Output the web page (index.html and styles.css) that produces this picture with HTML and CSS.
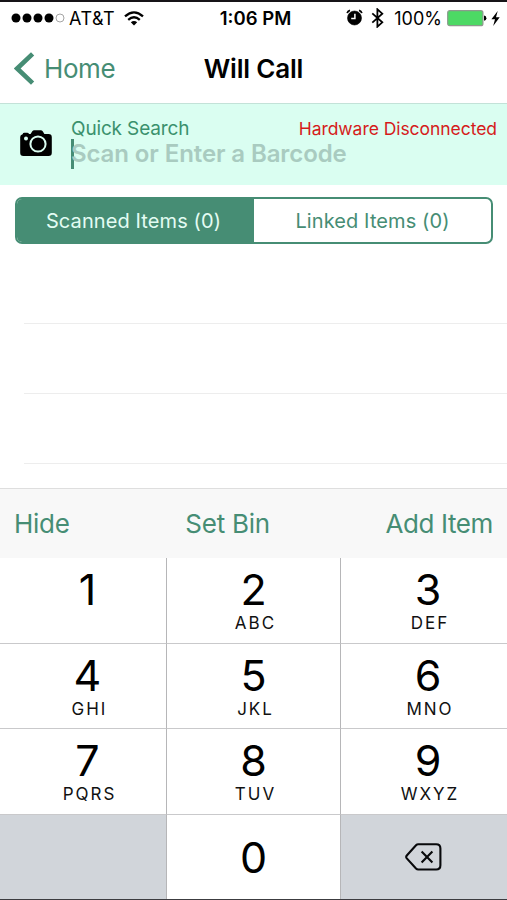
FILE: index.html
```html
<!DOCTYPE html>
<html lang="en">
<head>
<meta charset="utf-8">
<title>Will Call</title>
<link rel="stylesheet" href="styles.css">
</head>
<body>
<div class="screen">
  <header class="status">
    <div class="status-left">
      <svg class="signal" width="55" height="12" viewBox="0 0 55 12">
        <circle cx="5" cy="6" r="4.5"/><circle cx="16" cy="6" r="4.5"/><circle cx="27" cy="6" r="4.5"/><circle cx="38" cy="6" r="4.5"/>
        <circle class="signal-off" cx="49" cy="6" r="4"/>
      </svg>
      <span class="carrier">AT&amp;T</span>
      <svg class="wifi" width="20" height="15" viewBox="0 0 20 15">
        <path class="arc" d="M1 5.4Q10-2.6 19 5.4M4.2 8.9Q10 3.7 15.8 8.9"/>
        <path d="M6.8 11.2Q10 8.6 13.2 11.2L10 14.6Z"/>
      </svg>
    </div>
    <time class="clock">1:06 PM</time>
    <div class="status-right">
      <svg class="alarm" width="17" height="17" viewBox="0 0 17 17">
        <circle cx="8.5" cy="9" r="7"/>
        <path class="alarm-bell" d="M1.2 4.1Q1.7 2 4 1.4M13 1.4Q15.3 2 15.8 4.1"/>
        <path class="alarm-hand" d="M8.9 4.8V9.6H5.2"/>
      </svg>
      <svg class="bluetooth" width="13" height="20" viewBox="0 0 13 20"><path d="M1.3 5.4L11.3 14.3L6.4 18.7V1.3L11.3 5.7L1.3 14.6"/></svg>
      <span class="percent">100%</span>
      <svg class="battery" width="40" height="17" viewBox="0 0 40 17"><rect class="cell" x=".7" y=".7" width="35.2" height="15" rx="2"/><path d="M37 5.6Q39.4 6 39.4 8.2T37 10.8Z"/></svg>
      <svg class="bolt" width="9" height="15" viewBox="0 0 9 15"><path d="M6.7 0L.4 8.2H4L2.2 15L8.7 6.2H5Z"/></svg>
    </div>
  </header>

  <nav class="nav">
    <a class="back">
      <svg width="21" height="33" viewBox="0 0 21 33"><path d="M18.6 1.8L3.2 16.5L18.6 31.2"/></svg>
      <span>Home</span>
    </a>
    <h1 class="title">Will Call</h1>
  </nav>

  <section class="search">
    <svg class="camera" width="32" height="27" viewBox="0 0 32 27">
      <path d="M2.6 4.2Q3 2.8 4.4 2.8H7.2Q8.6 2.8 9 4H10.6L12.3 1.2Q13 .2 14.2 .2H20.8Q22 .2 22.7 1.2L24.4 4H28.6Q31.8 4 31.8 7.2V22.8Q31.8 26 28.6 26H3.4Q.2 26 .2 22.8V7Q.2 5 2.6 4.2Z"/>
      <circle class="lens" cx="18" cy="14" r="7.6"/>
      <circle class="flash" cx="6" cy="8.4" r="2"/>
    </svg>
    <div class="field">
      <div class="field-head"><span class="field-label">Quick Search</span><span class="alert">Hardware Disconnected</span></div>
      <div class="input"><span class="caret"></span><span class="placeholder">Scan or Enter a Barcode</span></div>
    </div>
  </section>

  <div class="tabs">
    <div class="tab tab-on"><span>Scanned Items (0)</span></div>
    <div class="tab"><span>Linked Items (0)</span></div>
  </div>

  <div class="list"><div class="row"></div><div class="row"></div><div class="row"></div></div>

  <div class="toolbar"><span>Hide</span><span>Set Bin</span><span class="add">Add Item</span></div>

  <div class="keypad">
    <div class="key left"><b>1</b></div>
    <div class="key"><b>2</b><i>ABC</i></div>
    <div class="key"><b>3</b><i>DEF</i></div>
    <div class="key left"><b>4</b><i>GHI</i></div>
    <div class="key"><b>5</b><i>JKL</i></div>
    <div class="key"><b>6</b><i>MNO</i></div>
    <div class="key left"><b>7</b><i>PQRS</i></div>
    <div class="key"><b>8</b><i>TUV</i></div>
    <div class="key"><b>9</b><i>WXYZ</i></div>
    <div class="key gray"></div>
    <div class="key zero"><b>0</b></div>
    <div class="key gray delete">
      <svg width="37" height="28" viewBox="0 0 37 28"><path d="M13.2 1.3H31.2Q35.4 1.3 35.4 5.5V22.3Q35.4 26.5 31.2 26.5H13.2Q12 26.5 11 25.5L1.8 15.4Q.6 14 1.8 12.5L11 2.3Q12 1.3 13.2 1.3Z"/><path d="M16.6 8.4L27.4 19.4M27.4 8.4L16.6 19.4"/></svg>
    </div>
  </div>
</div>
</body>
</html>
```
FILE: styles.css
```css
* { box-sizing: border-box; }
body { margin: 0; background: #fff; font-family: Inter, "Liberation Sans", sans-serif; color: #000; }
svg { display: block; flex: none; }
.screen {
  width: 507px;
  height: 900px;
  display: flex;
  flex-direction: column;
  border-top: 2px solid #161418;
  border-bottom: 1px solid #3c3c40;
  overflow: hidden;
  white-space: nowrap;
}

.status { height: 32px; display: grid; grid-template-columns: 1fr auto 1fr; align-items: center; padding: 0 8px 0 11px; font-size: 18px; }
.status-left, .status-right { display: flex; align-items: center; }
.status-right { justify-content: flex-end; margin-right: -1px; }
.signal-off { fill: none; stroke: #a5a5a5; stroke-width: 1; }
.carrier { margin-left: 3px; letter-spacing: .5px; }
.wifi { margin-left: 9px; }
.arc { fill: none; stroke: #000; stroke-width: 2.3; }
.clock { font-weight: 600; margin-left: -1px; font-size: 18.5px; padding-left: 2px; }
.alarm { margin-top: -1px; }
.alarm circle { stroke: #000; stroke-width: .6; }
.alarm-bell { fill: none; stroke: #000; stroke-width: 1.8; }
.alarm-hand { fill: none; stroke: #fff; stroke-width: 1.5; }
.bluetooth { margin-left: 8px; fill: none; stroke: #000; stroke-width: 1.8; }
.percent { margin-left: 10px; }
.battery { margin-left: 5px; }
.cell { fill: #4cd964; stroke: #8c9a8d; stroke-width: 1.2; }
.bolt { margin-left: 4px; }

.nav { height: 70px; display: grid; grid-template-columns: 1fr auto 1fr; align-items: center; padding: 0 14px; border-bottom: 1px solid #c3e2d8; }
.back { display: flex; align-items: center; gap: 9px; color: #468d74; font-size: 26px; letter-spacing: -.4px; }
.back path { fill: none; stroke: #468d74; stroke-width: 4.6; }
.title { margin: 0; font-size: 26px; font-weight: 600; letter-spacing: -.2px; }

.search { height: 81px; display: flex; padding: 0 10px 0 20px; background: #dafef1; }
.camera { margin-top: 26px; }
.lens { fill: none; stroke: #dafef1; stroke-width: 2; }
.flash { fill: #dafef1; }
.field { flex: 1; margin-left: 19px; padding-top: 13px; }
.field-head { height: 22px; display: flex; justify-content: space-between; align-items: center; }
.field-label { font-size: 19px; letter-spacing: -.15px; color: #3a916d; }
.alert { font-size: 17.5px; letter-spacing: -.05px; color: #d51b1b; }
.input { height: 30px; display: flex; align-items: center; }
.caret { width: 3px; height: 30px; margin-right: -3px; background: #468d74; }
.placeholder { margin-top: -1px; font-size: 24px; font-weight: 600; letter-spacing: -.1px; color: #a9cbc0; }

.tabs { height: 47px; margin: 12px 14px 0 15px; display: grid; grid-template-columns: 1fr 1fr; border: 2px solid #468d74; border-radius: 7px; overflow: hidden; font-size: 20px; letter-spacing: .1px; color: #468d74; }
.tab { display: flex; align-items: center; justify-content: center; }
.tab-on { background: #468d74; color: #e3fcf3; padding-right: 4px; }

.list { height: 244px; padding: 10px 0 0 24px; }
.row { height: 70px; border-bottom: 1px solid #ededed; }

.toolbar { height: 70px; display: flex; justify-content: space-between; align-items: center; padding: 0 14px; border-top: 1px solid #dedede; background: #f8f8f8; color: #468d74; font-size: 26px; letter-spacing: -.25px; }
.add { letter-spacing: -.4px; }

.keypad { flex: 1; display: grid; grid-template-columns: 167px 174px 166px; grid-template-rows: 86px 85px 86px 1fr; }
.key { display: flex; flex-direction: column; align-items: center; border-right: 1px solid #b6b6b8; border-bottom: 1px solid #c9c9cb; padding-top: 11px; }
.key:nth-child(3n) { border-right: 0; padding-left: 8px; }
.key:nth-last-child(-n+3) { border-bottom: 0; }
.left { padding-left: 9px; }
.key b { font-size: 43px; line-height: 40px; font-weight: 400; }
.key i { margin-top: 4px; font-size: 17px; line-height: 20px; font-style: normal; letter-spacing: 2px; margin-right: -4px; color: #111; }
.gray { background: #d1d5da; }
.zero { padding-top: 22px; }
.key.delete { padding: 28px 2px 0 0; }
.delete path { fill: none; stroke: #08090b; stroke-width: 2.1; }
```
